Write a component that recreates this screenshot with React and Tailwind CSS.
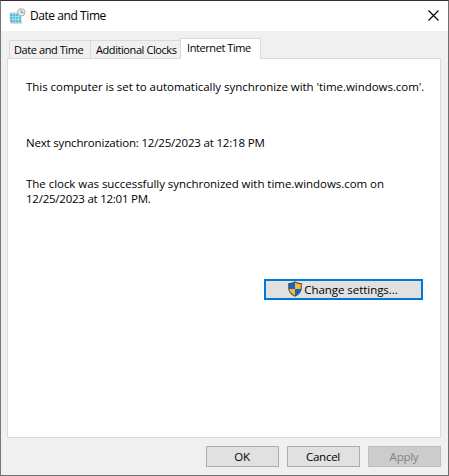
import React from "react";

function CalendarClockIcon() {
  return (
    <svg width="17" height="17" viewBox="0 0 17 17" className="shrink-0">
      <path d="M.5 4.500h12v9.500l.5 1.500H2L.8 14z" fill="#bcd0d9" />
      <path d="M1.200 6h10.800v8H1.500z" fill="#45b9dc" />
      <path d="M4 6v8M6.700 6v8M9.400 6v8M1.500 8.700h10.500M1.500 11.400h10.500" stroke="#c8edf6" strokeWidth="0.7" />
      <path d="M1.500 14.800h11.500" stroke="#b2c6cf" />
      <circle cx="12.300" cy="4.300" r="3.700" fill="#e6eaed" stroke="#a4aeb6" />
      <path d="M12.300 2V4.600h2.200" fill="none" stroke="#76838d" strokeWidth="0.9" />
    </svg>
  );
}

function ShieldIcon() {
  return (
    <svg width="14" height="16" viewBox="0 0 14 16" className="shrink-0 -translate-y-px">
      <path d="M7 .3C5.500 1.500 3 2.100.2 2.100V7c0 4 3 6.900 6.800 8.700C10.800 13.900 13.800 11 13.800 7V2.100C11 2.100 8.500 1.500 7 .3z" fill="#505050" />
      <path d="M7 1.500V8H1.300V3.100C3.600 3 5.500 2.500 7 1.500z" fill="#0b67cf" />
      <path d="M7 1.500V8h5.700V3.100C10.400 3 8.500 2.500 7 1.500z" fill="#ffb829" />
      <path d="M1.300 8H7v6.500C4 12.900 1.400 10.700 1.300 8z" fill="#ffb829" />
      <path d="M12.700 8H7v6.500c3-1.600 5.600-3.800 5.700-6.500z" fill="#0b67cf" />
    </svg>
  );
}

function Tab({ children, className }) {
  return (
    <button className={`flex items-center border border-b-0 border-[#d9d9d9] whitespace-nowrap ${className}`}>
      {children}
    </button>
  );
}

function DialogButton({ children, className }) {
  return (
    <button className={`flex h-[21px] w-[73px] items-center justify-center border pr-px tracking-[-0.25px] ${className}`}>
      {children}
    </button>
  );
}

export default function App() {
  return (
    <div className="relative flex h-[476px] w-[449px] flex-col overflow-hidden border border-t-[#302d30] border-r-[#707070] border-b-[#707070] border-l-[#777777] bg-[#f0f0f0] font-['Open_Sans','Noto_Sans',sans-serif] text-[11.5px] leading-[14px] text-black">
      <div className="absolute -left-px top-0 h-[58px] w-px bg-[#393739]" />
      <div className="absolute -left-px top-[105px] h-[26px] w-px bg-[#17456b]" />
      <div className="absolute -right-px top-0 h-[58px] w-px bg-[#302d30]" />

      <header className="flex h-[30px] shrink-0 items-center bg-white pl-2 pr-[9px]">
        <CalendarClockIcon />
        <span className="ml-1 text-[12px] tracking-[-0.43px]">Date and Time</span>
        <svg width="11" height="11" viewBox="0 0 11 11" className="ml-auto -translate-y-px">
          <path d="M.5.5l10 10M10.500.5l-10 10" stroke="#000" strokeWidth="1.1" fill="none" />
        </svg>
      </header>

      <nav className="flex h-[27px] shrink-0 items-end pl-2 text-[11px] tracking-[-0.42px]">
        <Tab className="h-[18px] w-[81px] border-r-0 pl-1">Date and Time</Tab>
        <Tab className="h-[18px] w-[90px] border-r-0 pl-[5px]">Additional Clocks</Tab>
        <Tab className="relative z-10 -mb-px h-[21px] w-[81px] bg-white pb-[2px] pl-[6px]">Internet Time</Tab>
      </nav>

      <main className="ml-[6px] flex h-[380px] w-[434px] shrink-0 flex-col border border-[#dcdcdc] bg-white pl-[18px] pt-[21px] whitespace-nowrap">
        <p className="tracking-[-0.04px]">This computer is set to automatically synchronize with 'time.windows.com'.</p>
        <p className="mt-[42px] tracking-[-0.18px]">Next synchronization: 12/25/2023 at 12:18 PM</p>
        <p className="mt-[27px] tracking-[-0.04px]">The clock was successfully synchronized with time.windows.com on</p>
        <p className="mt-px tracking-[-0.24px]">12/25/2023 at 12:01 PM.</p>
        <button className="ml-[238px] mt-[73px] flex h-[21px] w-[159px] items-center justify-center gap-[2px] border-2 border-[#0078d7] bg-[#e1e1e1] pr-px">
          <ShieldIcon />
          <span className="tracking-[-0.05px]">Change settings...</span>
        </button>
      </main>

      <footer className="mt-2 flex justify-end gap-2 pr-[7px]">
        <DialogButton className="border-[#adadad] bg-[#e1e1e1]">OK</DialogButton>
        <DialogButton className="border-[#adadad] bg-[#e1e1e1]">Cancel</DialogButton>
        <DialogButton className="border-[#bfbfbf] bg-[#cccccc] text-[#838383]">Apply</DialogButton>
      </footer>
    </div>
  );
}
